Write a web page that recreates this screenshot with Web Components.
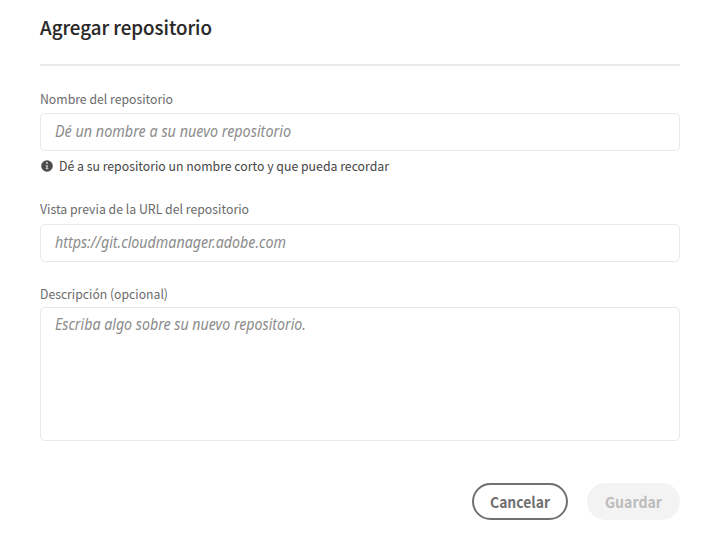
<!DOCTYPE html>
<html lang="es">
<head>
<meta charset="utf-8">
<title>Agregar repositorio</title>
<style>
body{margin:0;background:#fff;font-family:"Noto Sans CJK SC","Noto Sans",sans-serif}
</style>
</head>
<body>
<repo-dialog></repo-dialog>
<script>
// A single line of text, fitted horizontally to its "fit" width.
class FitText extends HTMLElement{
  constructor(){
    super();
    this.attachShadow({mode:'open'}).innerHTML=`<style>
      :host{display:block;height:20px;line-height:20px;white-space:nowrap}
      span{display:inline-block;transform-origin:0 50%;line-height:20px}
    </style><span><slot></slot></span>`;
  }
  connectedCallback(){
    const span=this.shadowRoot.querySelector('span');
    const target=Number(this.getAttribute('fit'));
    this.style.width=target+'px';
    span.style.transform=`scaleX(${target/span.getBoundingClientRect().width})`;
  }
}
class InfoIcon extends HTMLElement{
  constructor(){
    super();
    this.attachShadow({mode:'open'}).innerHTML=`<style>:host{display:block;width:12px;height:12px}svg{display:block}</style>
    <svg width="12" height="12" viewBox="0 0 12 12"><circle cx="6" cy="6" r="5.8" fill="#4b4b4b"/><circle cx="6" cy="3.1" r="1" fill="#ccc"/><path d="M4.6 5h2.1v3.5h.8v.8h-3v-.8h.8V5.8h-.7z" fill="#ccc"/></svg>`;
  }
}
class FormField extends HTMLElement{
  constructor(){
    super();
    this.attachShadow({mode:'open'}).innerHTML=`<style>
      :host{display:block}
      .label{height:20px;font-size:13px;color:#6b6b6b}
      .box{box-sizing:border-box;height:var(--box-height,38px);border:1px solid #e9e9e9;border-radius:5px;
        margin-top:var(--label-gap,5px);padding:var(--box-pad,7px) 14px 0;
        font:italic 15.5px "Noto Sans",sans-serif;color:#8c8c8c}
      .help{display:flex;gap:6px;align-items:center;font-size:13px;color:#464646}
    </style>
    <div class="label"><slot name="label"></slot></div>
    <div class="box"><slot></slot></div>
    <div class="help"><slot name="help"></slot></div>`;
  }
}
class PillButton extends HTMLElement{
  constructor(){
    super();
    this.attachShadow({mode:'open'}).innerHTML=`<style>
      :host{display:flex;box-sizing:border-box;width:96px;height:37px;border:2px solid #707070;border-radius:19px;
        align-items:center;justify-content:center;color:#707070;font-weight:700;font-size:15px;background:#fff}
      :host([disabled]){width:93px;border-color:#f3f3f3;background:#f3f3f3;color:#bcbcbc}
    </style><slot></slot>`;
  }
}
class RepoDialog extends HTMLElement{
  constructor(){
    super();
    this.attachShadow({mode:'open'}).innerHTML=`<style>
      :host{display:block;box-sizing:border-box;width:720px;height:536px;padding:17px 40px 0;background:#fff}
      header{border-bottom:2px solid #e9e9e9;box-sizing:border-box;height:49px;font-size:19px;font-weight:500;color:#282828;-webkit-text-stroke:.12px #282828}
      .name{--label-gap:4px;margin-top:23px;height:110px}
      .url{height:85px}
      .desc{--box-height:134px;--box-pad:6px;--label-gap:3px}
      info-icon{margin-left:1px}
      .help{display:flex;align-items:center;gap:6px;margin-top:5px}
      footer{display:flex;justify-content:flex-end;gap:19px;margin-top:42px}
    </style>
    <header><fit-text fit="172">Agregar repositorio</fit-text></header>
    <form-field class="name"><fit-text slot="label" fit="133">Nombre del repositorio</fit-text>
      <fit-text fit="236">Dé un nombre a su nuevo repositorio</fit-text>
      <div class="help" slot="help"><info-icon></info-icon><fit-text fit="330">Dé a su repositorio un nombre corto y que pueda recordar</fit-text></div></form-field>
    <form-field class="url"><fit-text slot="label" fit="209">Vista previa de la URL del repositorio</fit-text>
      <fit-text fit="231">https://git.cloudmanager.adobe.com</fit-text></form-field>
    <form-field class="desc"><fit-text slot="label" fit="128">Descripción (opcional)</fit-text>
      <fit-text fit="251">Escriba algo sobre su nuevo repositorio.</fit-text></form-field>
    <footer><pill-button><fit-text fit="60">Cancelar</fit-text></pill-button><pill-button disabled><fit-text fit="57">Guardar</fit-text></pill-button></footer>`;
  }
}
customElements.define('info-icon',InfoIcon);
customElements.define('form-field',FormField);
customElements.define('pill-button',PillButton);
customElements.define('repo-dialog',RepoDialog);
customElements.define('fit-text',FitText);
</script>
</body>
</html>
